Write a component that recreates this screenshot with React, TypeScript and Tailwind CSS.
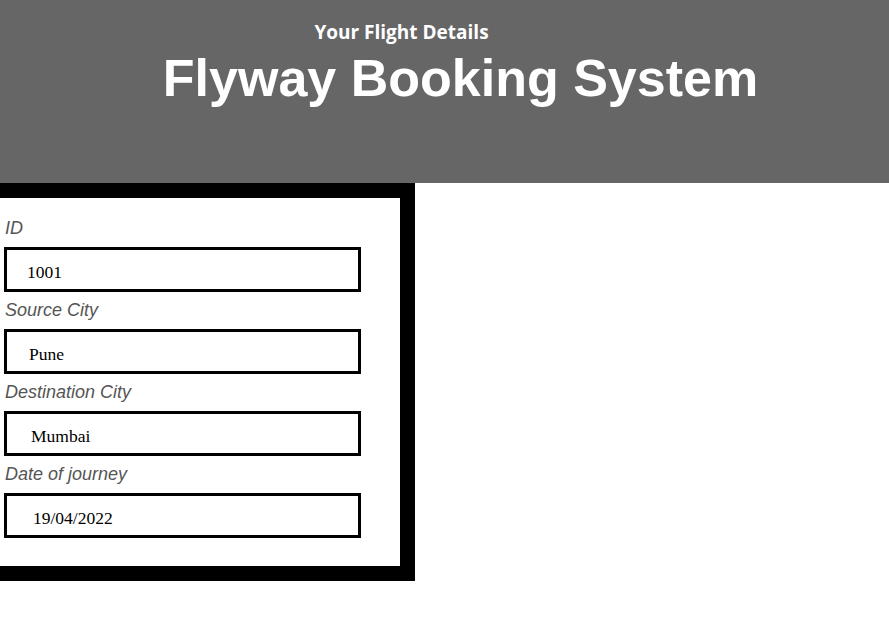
export default function App() {
  const fields = [
    { label: "ID", value: "1001", pad: "pl-[20px]" },
    { label: "Source City", value: "Pune", pad: "pl-[22px]" },
    { label: "Destination City", value: "Mumbai", pad: "pl-[24px]" },
    { label: "Date of journey", value: "19/04/2022", pad: "pl-[26px]" },
  ];

  return (
    <div className="min-h-screen w-[889px] bg-white">
      <header className="h-[183px] bg-[#666666] flex flex-col items-center">
        <h3 className="mt-[19px] text-white text-[19px] font-bold leading-[26px] font-['Open_Sans','Noto_Sans',sans-serif] -translate-x-[43px]">
          Your Flight Details
        </h3>
        <h1 className="mt-[2px] text-white text-[52px] font-bold leading-[62px] font-['Liberation_Sans',Arial,sans-serif] translate-x-[16px]">
          Flyway Booking System
        </h1>
      </header>

      <div className="-ml-[15px] w-[430px] border-[15px] border-black bg-white pl-[5px] pt-[20px] pb-[20px]">
        {fields.map((f) => (
          <div key={f.label} className="flex flex-col">
            <label className="text-[18px] leading-[21px] italic text-[#555] font-['Liberation_Sans',Arial,sans-serif]">
              {f.label}
            </label>
            <div
              className={`mt-[8px] mb-[8px] -ml-[1px] w-[357px] h-[45px] border-[3px] border-black flex items-center pt-[5px] ${f.pad} text-[17.5px] text-black font-['Liberation_Serif','Times_New_Roman',serif]`}
            >
              {f.value}
            </div>
          </div>
        ))}
      </div>
    </div>
  );
}
